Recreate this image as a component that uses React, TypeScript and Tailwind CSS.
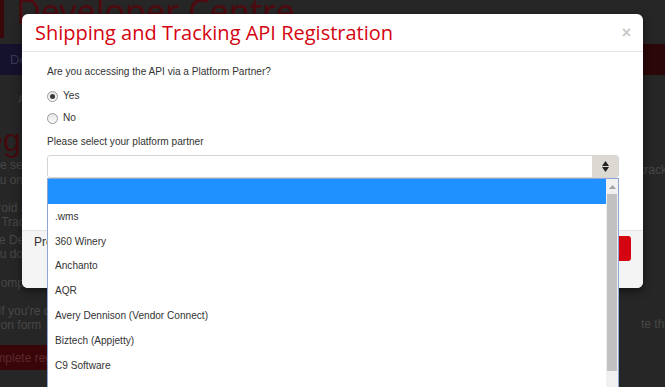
import { ReactNode } from 'react';

const partners = [
  '.wms',
  '360 Winery',
  'Anchanto',
  'AQR',
  'Avery Dennison (Vendor Connect)',
  'Biztech (Appjetty)',
  'C9 Software',
];

const Radio = ({ checked, children }: { checked?: boolean; children: ReactNode }) => (
  <label className="flex items-center gap-[5px] h-[20px]">
    <span className="w-[11px] h-[11px] rounded-full border border-[#9a9a9a] bg-gradient-to-b from-[#e6e6e6] to-[#fafafa] flex items-center justify-center">
      {checked && <span className="w-[5px] h-[5px] rounded-full bg-[#3a3a3a]" />}
    </span>
    <span>{children}</span>
  </label>
);

// the background page, already dimmed by the modal backdrop
const PageBehind = () => (
  <div className="w-full h-full bg-[#262626] text-[#474747] text-[12px]">
    <div className="h-[44px] flex items-start gap-[12px] overflow-hidden">
      <span className="w-[4px] h-[38px] bg-[#3a080b]" />
      <span className="-mt-[6px] text-[34px] text-[#4d0b10] leading-none whitespace-nowrap" style={{ fontFamily: '"Noto Sans", sans-serif' }}>
        Developer Centre
      </span>
    </div>
    <div className="h-[31px] flex">
      <div className="flex-1 bg-[#15122e] flex items-center pl-[10px] text-[13px] text-[#3a3852]">Developer Home</div>
      <div className="w-[90px] bg-[#2c0709]" />
    </div>
    <div className="flex justify-between">
      <div className="w-[300px] overflow-hidden whitespace-nowrap">
        <div className="mt-[18px] pl-[18px] h-[14px] leading-[14px] text-[10px]">After you register</div>
        <div className="mt-[17px] -ml-[38px] h-[32px] text-[32px] leading-none text-[#440a0e]">Registration</div>
        <div className="mt-[2px] leading-[14px]">
          <div className="-ml-[14px]">The self service</div>
          <div className="mt-[1px] -ml-[13px]">you only need</div>
          <div className="mt-[14px] -ml-[24px]">Android and</div>
          <div className="-ml-[12px]">of Tracking</div>
          <div className="mt-[4px] -ml-[15px]">The Developer</div>
          <div className="-ml-[13px]">you do not</div>
          <div className="mt-[15px] -ml-[8px]">Complete the</div>
          <div className="mt-[14px] -ml-[2px]">If you're developing</div>
          <div className="-ml-[16px]">ration form</div>
        </div>
        <div className="mt-[13px] h-[25px] w-[60px] bg-[#3a0508] text-[#5c2a2c] flex items-center -ml-[4px]">
          <span className="-ml-[16px]">Complete registration</span>
        </div>
      </div>
      <div className="w-[24px] overflow-hidden text-[12px] whitespace-nowrap">
        <div className="mt-[86px]">tracking</div>
        <div className="mt-[136px]">te the</div>
      </div>
    </div>
  </div>
);

export default function App() {
  return (
    <div className="relative w-[665px] h-[387px] overflow-hidden" style={{ fontFamily: '"Liberation Sans", Arial, sans-serif' }}>
      <PageBehind />

      {/* Modal */}
      <div className="absolute left-[22px] top-[14px] w-[621px] h-[274px] bg-white rounded-[6px] shadow-[0_3px_9px_rgba(0,0,0,0.5)] flex flex-col text-[10.1px] text-[#333]">
        <div className="h-[38px] border-b border-[#e5e5e5] flex items-center justify-between pl-[13px] pr-[12px]">
          <h4 className="text-[20px] text-[#d40511] leading-none" style={{ fontFamily: '"Open Sans", sans-serif' }}>
            Shipping and Tracking API Registration
          </h4>
          <span className="text-[16px] text-[#c8c8c8] font-bold leading-none">×</span>
        </div>

        <div className="flex-1 pl-[25px] pr-[24px] pt-[10px]">
          <div className="h-[20px] flex items-center">Are you accessing the API via a Platform Partner?</div>
          <div className="mt-[4px]">
            <Radio checked>Yes</Radio>
          </div>
          <div className="mt-[2px]">
            <Radio>No</Radio>
          </div>
          <div className="mt-[4px] h-[20px] flex items-center">Please select your platform partner</div>

          <div className="relative mt-[3px]">
            <div className="h-[23px] border border-[#d5d5d5] rounded-[3px] flex justify-end overflow-hidden">
              <div className="w-[26px] h-full bg-[#dcd9d3] flex flex-col items-center justify-center gap-[1px]">
                <svg width="7" height="5" viewBox="0 0 7 5"><path d="M3.5 0 L7 5 L0 5 Z" fill="#222" /></svg>
                <svg width="7" height="5" viewBox="0 0 7 5"><path d="M0 0 L7 0 L3.5 5 Z" fill="#222" /></svg>
              </div>
            </div>

            {/* open dropdown list */}
            <div className="absolute left-0 top-[23px] w-[572px] h-[220px] bg-white border border-[#8fa6d4] border-b-0 flex z-10">
              <div className="flex-1">
                <div className="h-[25px] bg-[#1e90ff]" />
                {partners.map(p => (
                  <div key={p} className="h-[24.8px] flex items-center pl-[7px] text-[10.1px] text-[#333]">
                    {p}
                  </div>
                ))}
              </div>
              <div className="w-[12px] bg-[#f0f0f0] flex flex-col items-center">
                <svg width="7" height="4" viewBox="0 0 7 4" className="mt-[6px]"><path d="M3.5 0 L7 4 L0 4 Z" fill="#a3a3a3" /></svg>
                <div className="mt-[5px] w-[10px] h-[177px] bg-[#c1c1c1]" />
              </div>
            </div>
          </div>
        </div>

        <div className="h-[58px] bg-[#f4f4f4] border-t border-[#e5e5e5] rounded-b-[6px] flex items-start justify-between pl-[12px] pr-[12px] pt-[3px]">
          <span className="text-[12px] leading-[16px] text-[#333]">Proceed to registration</span>
          <button className="mt-[2px] h-[25px] px-[12px] bg-[#d40511] text-white text-[12px] rounded-[3px]">Next</button>
        </div>
      </div>
    </div>
  );
}
